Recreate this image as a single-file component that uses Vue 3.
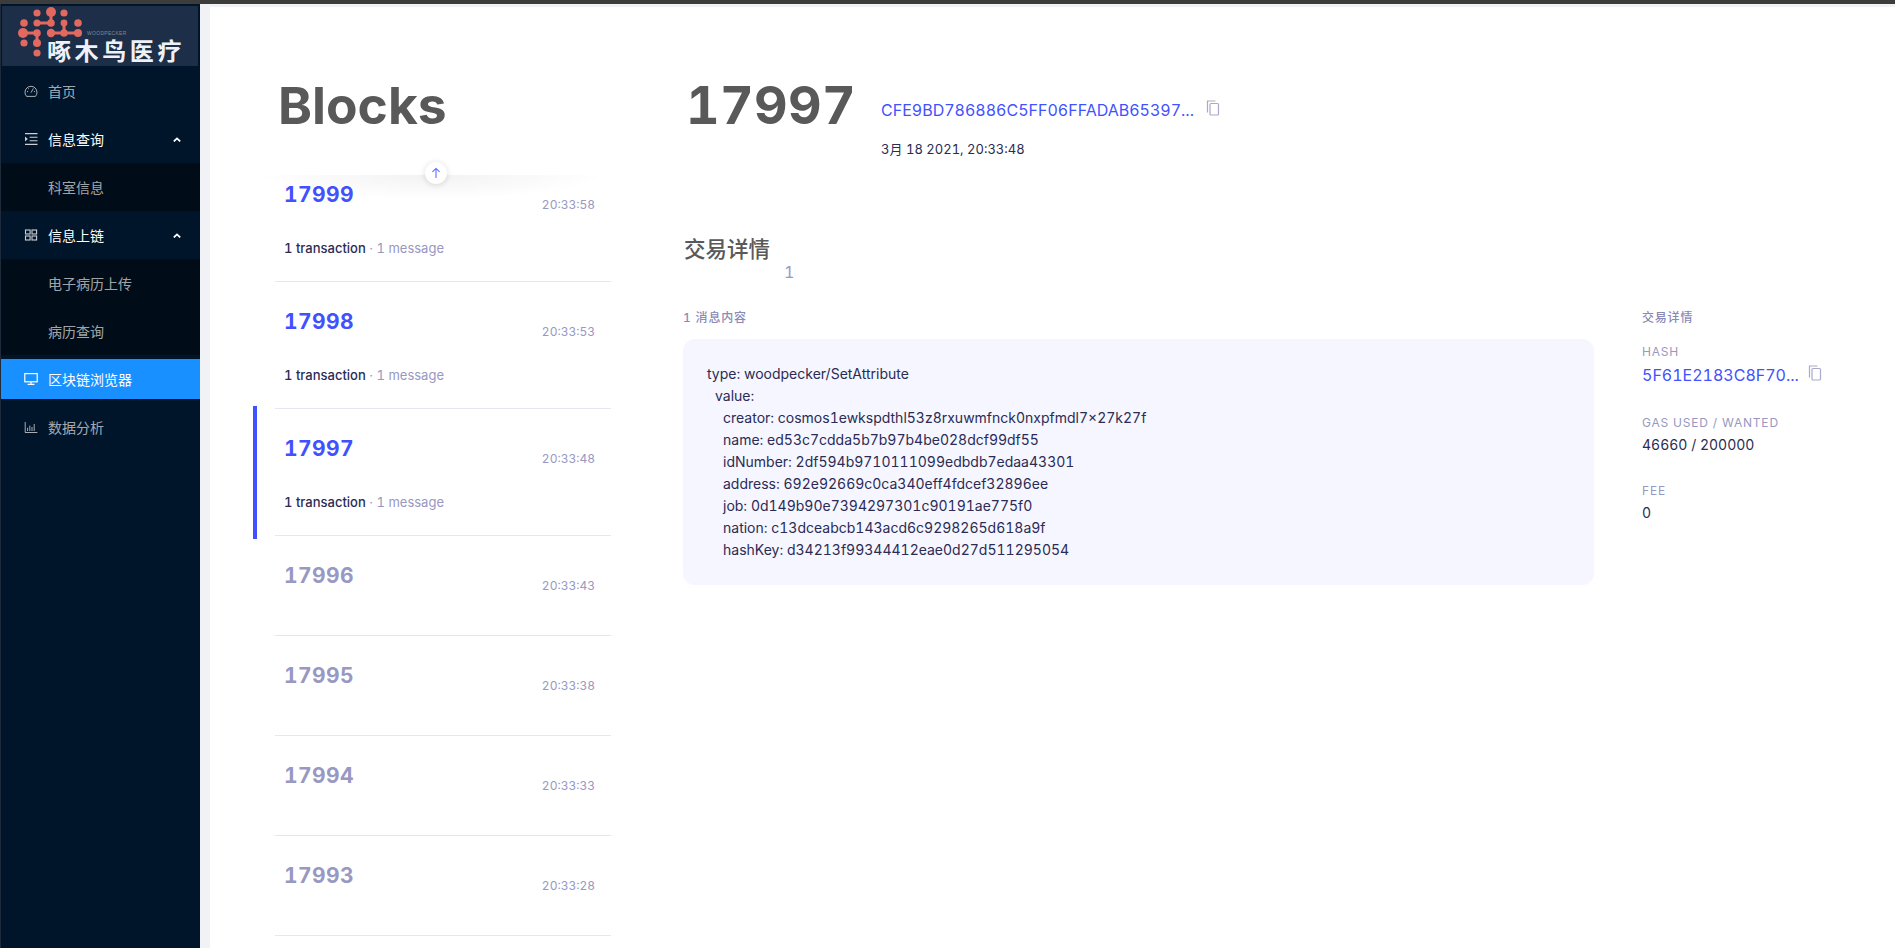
<script setup>
const blocks = [
  { height: 17999, time: '20:33:58', txs: true },
  { height: 17998, time: '20:33:53', txs: true },
  { height: 17997, time: '20:33:48', txs: true, active: true },
  { height: 17996, time: '20:33:43' },
  { height: 17995, time: '20:33:38' },
  { height: 17994, time: '20:33:33' },
  { height: 17993, time: '20:33:28' },
]

const msgLines = [
  { text: 'type: woodpecker/SetAttribute', indent: 0 },
  { text: 'value:', indent: 1 },
  { text: 'creator: cosmos1ewkspdthl53z8rxuwmfnck0nxpfmdl7×27k27f', indent: 2 },
  { text: 'name: ed53c7cdda5b7b97b4be028dcf99df55', indent: 2 },
  { text: 'idNumber: 2df594b9710111099edbdb7edaa43301', indent: 2 },
  { text: 'address: 692e92669c0ca340eff4fdcef32896ee', indent: 2 },
  { text: 'job: 0d149b90e7394297301c90191ae775f0', indent: 2 },
  { text: 'nation: c13dceabcb143acd6c9298265d618a9f', indent: 2 },
  { text: 'hashKey: d34213f99344412eae0d27d511295054', indent: 2 },
]

// logo dots, in logo coordinates
const dots = [
  [35, 7, 3.6], [49, 6, 5], [62, 7, 3.6],
  [22, 17, 3.8], [35, 17, 3.6], [49, 17, 3.8], [62, 17, 3.4], [76, 17, 3.8],
  [21, 27, 5], [35, 27, 3.8], [49, 27, 4.2], [62, 27, 3.8], [76, 27, 4],
  [22, 37, 3.6], [35, 37, 4], [35, 47, 3.6],
]
</script>

<template>
  <div class="page">
    <div class="topbar"></div>
    <div class="shell">
      <aside class="sidebar">
        <div class="logo">
          <svg width="196" height="60" viewBox="0 0 196 60">
            <g fill="#e2695f">
              <circle v-for="(d, i) in dots" :key="i" :cx="d[0]" :cy="d[1]" :r="d[2]" />
            </g>
            <path d="M21 27H35M35 17H49M49 6V17M35 27V37M49 27H62M62 17V27H76" fill="none" stroke="#e2695f" stroke-width="3" />
            <text x="85" y="29" class="logo-en">WOODPECKER</text>
            <text x="45" y="54" class="logo-cn">啄木鸟医疗</text>
          </svg>
        </div>

        <nav class="menu">
          <div class="item">
            <svg class="ico" viewBox="0 0 14 14" fill="none" stroke="currentColor" stroke-width="1">
              <path d="M2.6 12.4A6 6 0 1 1 11.4 12.4Z" stroke-linejoin="round" />
              <path d="M7 8.6 9.4 4.4M3 7.6H4.1M9.9 7.6H11M4.2 4.4 5 5.2" />
            </svg>
            <span>首页</span>
          </div>

          <div class="item open">
            <svg class="ico" viewBox="0 0 14 14" fill="none" stroke="currentColor" stroke-width="1.1">
              <path d="M1 1.6H13.5M5.6 5.2H13.5M5.6 8.8H13.5M1 12.4H13.5" />
              <path d="M1 4.6 3.8 7 1 9.4Z" fill="currentColor" stroke="none" />
            </svg>
            <span>信息查询</span>
            <svg class="caret" viewBox="0 0 8 5"><path d="M0.8 4.4 4 1.4 7.2 4.4" fill="none" stroke="currentColor" stroke-width="1.8" /></svg>
          </div>
          <div class="sub">
            <div class="item child">科室信息</div>
          </div>

          <div class="item open">
            <svg class="ico" viewBox="0 0 14 14" fill="none" stroke="currentColor" stroke-width="1.1">
              <rect x="1.5" y="2" width="4.6" height="4" />
              <rect x="8" y="2" width="4.6" height="4" />
              <rect x="1.5" y="8" width="4.6" height="4" />
              <rect x="8" y="8" width="4.6" height="4" />
            </svg>
            <span>信息上链</span>
            <svg class="caret" viewBox="0 0 8 5"><path d="M0.8 4.4 4 1.4 7.2 4.4" fill="none" stroke="currentColor" stroke-width="1.8" /></svg>
          </div>
          <div class="sub">
            <div class="item child">电子病历上传</div>
            <div class="item child">病历查询</div>
          </div>

          <div class="item selected">
            <svg class="ico" viewBox="0 0 14 14" fill="none" stroke="currentColor" stroke-width="1.2">
              <rect x="0.8" y="1.6" width="12.4" height="8.2" />
              <path d="M7 9.8V12.2M3.6 12.4H10.4" />
            </svg>
            <span>区块链浏览器</span>
          </div>

          <div class="item">
            <svg class="ico" viewBox="0 0 14 14" fill="none" stroke="currentColor" stroke-width="1">
              <path d="M1.2 2V12.5H13.4" />
              <path d="M3.6 11V7.8M5.8 11V5.6M8 11V7M10.2 11V4" />
            </svg>
            <span>数据分析</span>
          </div>
        </nav>
      </aside>

      <main class="content">
        <section class="list-col">
          <h1 class="big-title">Blocks</h1>
          <div class="list-wrap">
            <div class="list-shadow"></div>
            <div class="to-top">
              <svg width="12" height="12" viewBox="0 0 12 12" fill="none" stroke="#5f6cff" stroke-width="1.1">
                <path d="M6 11V1.4M2.4 4.8 6 1.4 9.6 4.8" />
              </svg>
            </div>
            <div class="list-scroll">
              <div class="list">
                <div v-for="b in blocks" :key="b.height" class="row" :class="{ active: b.active, 'has-tx': b.txs }">
                  <div class="row-inner">
                    <div class="row-top">
                      <span class="num">{{ b.height }}</span>
                      <span class="time">{{ b.time }}</span>
                    </div>
                    <div v-if="b.txs" class="row-msg"><span class="dark">1 transaction</span> · 1 message</div>
                  </div>
                </div>
              </div>
            </div>
          </div>
        </section>

        <section class="detail-col">
          <header class="detail-head">
            <div class="big-title height-title">17997</div>
            <div class="head-meta">
              <div class="hash-line">
                <span class="link">CFE9BD786886C5FF06FFADAB65397...</span>
                <svg class="copy" viewBox="0 0 14 16" fill="none" stroke="#a9a9cb" stroke-width="1.2">
                  <path d="M1.5 12.5V1H9.5" />
                  <rect x="4" y="3.5" width="8.5" height="11.5" rx="1" />
                </svg>
              </div>
              <div class="date">3月 18 2021, 20:33:48</div>
            </div>
          </header>

          <h2 class="tx-title">交易详情</h2>
          <div class="tx-count">1</div>

          <div class="tx-body">
            <div class="messages">
              <div class="label">1 消息内容</div>
              <div class="msg-card">
                <div v-for="(l, i) in msgLines" :key="i" :class="'ind' + l.indent">{{ l.text }}</div>
              </div>
            </div>
            <div class="info">
              <div class="label">交易详情</div>
              <div class="field first">
                <div class="field-name">HASH</div>
                <div class="hash-line tx-hash">
                  <span class="link">5F61E2183C8F70...</span>
                  <svg class="copy" viewBox="0 0 14 16" fill="none" stroke="#a9a9cb" stroke-width="1.2">
                    <path d="M1.5 12.5V1H9.5" />
                    <rect x="4" y="3.5" width="8.5" height="11.5" rx="1" />
                  </svg>
                </div>
              </div>
              <div class="field gas">
                <div class="field-name">GAS USED / WANTED</div>
                <div class="field-val">46660 / 200000</div>
              </div>
              <div class="field">
                <div class="field-name">FEE</div>
                <div class="field-val">0</div>
              </div>
            </div>
          </div>
        </section>
      </main>
    </div>
  </div>
</template>

<style>
html, body { margin: 0; height: 100%; overflow: hidden; background: #fff; }
</style>

<style scoped>
.page {
  width: 1895px;
  height: 948px;
  display: flex;
  flex-direction: column;
  overflow: hidden;
  font-family: Inter, "Noto Sans CJK SC", sans-serif;
  font-variant-numeric: tabular-nums;
}
.topbar { height: 4px; flex: none; background: #3c3c3c; }
.shell { flex: 1; display: flex; min-height: 0; background: #f0f2f5; }

.sidebar {
  width: 199px;
  flex: none;
  background: #001529;
  border-left: 1px solid #1f2b3a;
  font-family: "Noto Sans CJK SC", sans-serif;
}
.logo { height: 63px; padding: 2px 0 0 1px; box-sizing: border-box; }
.logo svg { display: block; background: #1c2e48; }
.logo-en { font: 5px "Liberation Sans", sans-serif; fill: #7f8a9a; letter-spacing: 0.3px; }
.logo-cn { font: 700 24px "Noto Sans CJK SC", sans-serif; fill: #eef1f5; letter-spacing: 3.6px; }

.item {
  height: 48px;
  display: flex;
  align-items: center;
  padding-left: 23px;
  color: rgba(255, 255, 255, 0.65);
  font-size: 14px;
}
.ico { width: 14px; height: 14px; margin-right: 10px; flex: none; }
.open { color: #fff; }
.open .ico { color: rgba(255, 255, 255, 0.8); }
.caret { width: 8px; height: 5px; margin-left: auto; margin-right: 19px; color: #fff; }
.sub { background: #000c17; }
.child { padding-left: 47px; }
.selected { color: #fff; background: #1890ff; height: 40px; margin: 4px 0; }
.selected .ico { color: #fff; }

.content {
  flex: 1;
  display: flex;
  min-width: 0;
  margin: 3px 0 0 10px;
  background: #fff;
  color: #2b2b54;
  padding-left: 43px;
}

.list-col { width: 358px; flex: none; }
.big-title {
  margin: 0;
  font-size: 52px;
  font-weight: 700;
  line-height: 63px;
  color: #595959;
}
.height-title { letter-spacing: 0.4px; }
.list-col .big-title { margin: 67px 0 0 25px; font-size: 51.5px; }
.list-wrap { position: relative; margin-top: 38px; }
.list-scroll { height: 773px; overflow: hidden; }
.list-shadow {
  position: absolute;
  top: 0;
  left: 4px;
  right: 4px;
  height: 24px;
  background: radial-gradient(ellipse 50% 100% at 50% 0, rgba(0, 0, 0, 0.05), rgba(0, 0, 0, 0));
  z-index: 1;
}
.to-top {
  position: absolute;
  top: -13px;
  left: 172px;
  width: 22px;
  height: 22px;
  border-radius: 50%;
  background: #fff;
  box-shadow: 0 1px 6px rgba(0, 0, 0, 0.14);
  display: flex;
  align-items: center;
  justify-content: center;
  z-index: 2;
}
.list { margin-top: -20px; }
.row { position: relative; padding-left: 22px; }
.row.active::before {
  content: "";
  position: absolute;
  left: 0;
  top: -3px;
  bottom: -3px;
  width: 4px;
  background: #4251ff;
}
.row-inner { height: 99px; border-bottom: 1px solid #e6e6ee; padding: 0 16px 0 9px; }
.has-tx .row-inner { height: 126px; }
.row-top { display: flex; justify-content: space-between; padding-top: 25px; }
.num { font-size: 21px; font-weight: 700; line-height: 30px; color: #9898c2; letter-spacing: 0.4px; }
.has-tx .num { color: #4251ff; }
.time { font-size: 12px; line-height: 16px; color: #9898c2; margin-top: 17px; }
.row-msg { margin-top: 27px; font-size: 13px; line-height: 16px; color: #9898c2; }
.dark { color: #2b2b54; font-weight: 500; }

.detail-col { flex: 1; min-width: 0; margin-left: 72px; }
.detail-head { display: flex; margin-top: 67px; padding-left: 3px; }
.head-meta { margin-left: 25px; padding-top: 26px; }
.hash-line { display: flex; align-items: flex-start; }
.link { font-size: 16px; line-height: 20px; color: #4251ff; }
.copy { width: 14px; height: 16px; margin-left: 12px; flex: none; }
.tx-hash .copy { margin-left: 9px; }
.date { margin-top: 21px; font-size: 13px; line-height: 16px; color: #2b2b54; }

.tx-title {
  margin: 78px 0 0 1px;
  font-size: 21.5px;
  font-weight: 500;
  line-height: 26px;
  color: #595959;
  font-family: "Noto Sans CJK SC", sans-serif;
}
.tx-count { margin: 1px 0 0 101px; font-size: 16px; line-height: 20px; color: #9898c2; }

.tx-body { display: flex; margin-top: 29px; }
.messages { width: 911px; flex: none; }
.label { font-size: 12px; line-height: 14px; font-weight: 500; color: #8a8ab5; letter-spacing: 0.8px; }
.msg-card {
  margin-top: 14px;
  background: #f5f6ff;
  border-radius: 12px;
  padding: 24px;
  height: 246px;
  box-sizing: border-box;
  font-size: 14px;
  line-height: 22px;
  color: #2b2b54;
}
.ind1 { padding-left: 8px; }
.ind2 { padding-left: 16px; }

.info { margin-left: 48px; }
.field { margin-top: 28px; }
.field.first { margin-top: 19px; }
.field.gas { margin-top: 30px; }
.field-name { font-size: 12px; line-height: 16px; color: #9898c2; letter-spacing: 0.8px; }
.field-val { margin-top: 4px; font-size: 14px; line-height: 20px; color: #2b2b54; }
.tx-hash { margin-top: 5px; }
</style>
